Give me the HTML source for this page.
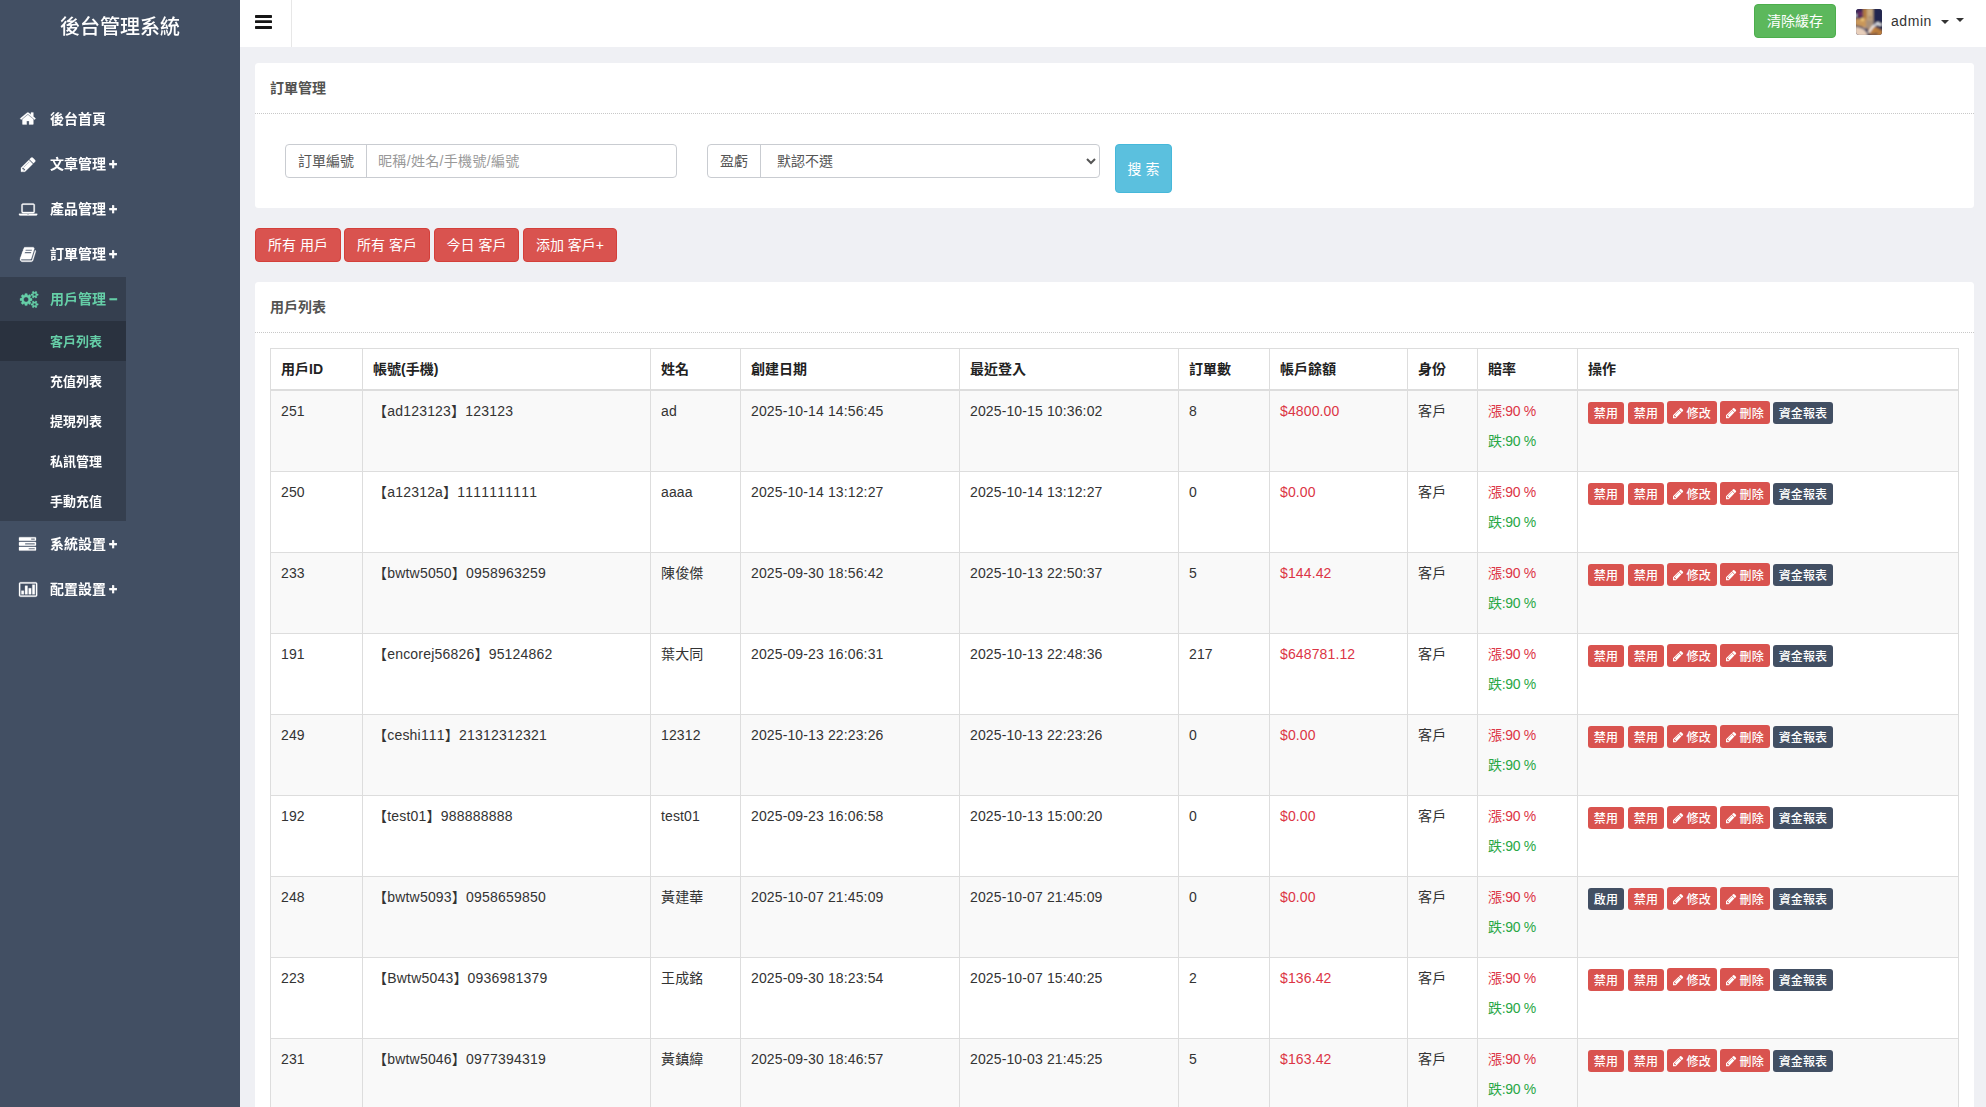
<!DOCTYPE html>
<html lang="zh-Hant">
<head>
<meta charset="utf-8">
<title>後台管理系統</title>
<style>
*{box-sizing:border-box;}
html,body{margin:0;padding:0;}
body{width:1986px;height:1107px;overflow:hidden;background:#eff0f4;font-family:"Liberation Sans","Noto Sans CJK TC",sans-serif;font-size:14px;line-height:20px;color:#333;position:relative;}
svg{display:block;}
/* ---------- sidebar ---------- */
#side{position:absolute;left:0;top:0;width:240px;height:1107px;background:#424f63;will-change:transform;}
#logo{position:absolute;left:0;top:0;width:240px;height:54px;line-height:54px;text-align:center;color:#fff;font-size:20px;font-weight:500;}
#nav{position:absolute;left:0;top:97px;width:126px;margin:0;padding:0;list-style:none;}
#nav>li{margin:0 0 1px 0;padding:0;}
#nav>li>a{display:block;position:relative;height:44px;line-height:44px;padding-left:50px;color:#fff;font-weight:bold;font-size:14px;white-space:nowrap;text-decoration:none;}
#nav>li>a .ic{position:absolute;left:0;top:0;}
#nav>li>a b{font-weight:bold;margin-left:3px;-webkit-text-stroke:0.6px currentColor;}
#nav>li.act{background:#353f4f;margin-bottom:1px;}
#nav>li.act>a{color:#65cea7;}
#nav ul{margin:0;padding:0;list-style:none;}
#nav ul li a{display:block;height:40px;line-height:41.5px;padding-left:50px;color:#fff;font-size:13px;font-weight:bold;text-decoration:none;}
#nav ul li.on a{background:#2a323f;color:#65cea7;}
/* ---------- header ---------- */
#head{position:absolute;left:240px;top:0;width:1746px;height:47px;background:#fff;}
#tog{position:absolute;left:0;top:0;width:52px;height:47px;border-right:1px solid #e7e7e7;}
#clr{display:block;position:absolute;left:1514px;top:4px;width:82px;height:34px;line-height:32px;border:1px solid #4cae4c;background:#5cb85c;color:#fff;border-radius:4px;text-align:center;font-size:14px;}
#ava{position:absolute;left:1616px;top:9px;width:26px;height:26px;border-radius:3px;overflow:hidden;}
#adm{position:absolute;left:1651px;top:11px;height:20px;line-height:20px;font-size:14px;color:#333;letter-spacing:0.55px;}
.caret{position:absolute;width:0;height:0;border-left:4px solid transparent;border-right:4px solid transparent;border-top:4px solid #333;}
/* ---------- panels ---------- */
.panel{position:absolute;left:255px;width:1719px;background:#fff;border-radius:3.5px;}
.ph{height:51px;padding:15px;line-height:20px;font-weight:bold;color:#535351;border-bottom:1px dotted #c8c8c8;font-size:14px;}
.ig{position:absolute;height:34px;border:1px solid #c9ccd1;border-radius:4px;background:#fff;}
.ig .ad{position:absolute;left:0;top:0;height:32px;line-height:32px;padding:0 12px;color:#555;border-right:1px solid #c9ccd1;}
.ig .inp{position:absolute;top:0;height:32px;line-height:32px;color:#999;}
.ig .ph1{letter-spacing:0.33px;}
#chev{position:absolute;left:377px;top:12.2px;}
.fc{position:absolute;top:0;height:32px;margin:0;border:0;outline:0;background:transparent;padding:6px 12px;font-family:"Liberation Sans","Noto Sans CJK TC",sans-serif;font-size:14px;line-height:20px;color:#555;border-radius:0 4px 4px 0;}
input.fc::placeholder{color:#999;opacity:1;letter-spacing:0.33px;}
#sbtn{margin:0;padding:0;font:inherit;font-size:14px;display:block;position:absolute;left:860px;top:81px;width:57px;height:49px;line-height:47px;padding-top:1px;border:1px solid #46b8da;background:#5bc0de;border-radius:4px;color:#fff;text-align:center;}
.rb{display:block;position:absolute;top:228px;height:34px;line-height:32px;border:1px solid #d43f3a;background:#d9534f;border-radius:4px;color:#fff;text-align:center;white-space:nowrap;}

/* ---------- table ---------- */
#tb{position:absolute;left:15px;top:66px;width:1689px;border-collapse:collapse;table-layout:fixed;border:1px solid #ddd;}
#tb th,#tb td{border:1px solid #ddd;padding:10px;vertical-align:top;text-align:left;line-height:20px;font-size:14px;color:#333;white-space:nowrap;overflow:hidden;}
#tb th{font-weight:bold;height:41px;border-bottom:2px solid #ddd;color:#222;}
#tb td{height:81px;}
#tb tbody tr:nth-child(odd) td{background:#f9f9f9;}
#tb td{letter-spacing:0.13px;font-kerning:none;}
#tb td.acc{letter-spacing:0.2px;}
#tb p{margin:0 0 10px 0;letter-spacing:-0.3px;}
#tb td.rd,#tb .rd{color:#dc3545;}
#tb .gr{color:#28a745;}
#tb td.ops{padding:11px 10px 0 10px;font-size:0;}
.lb{display:inline-block;vertical-align:top;height:22px;line-height:24px;width:36px;margin:0 3px 0 0;overflow:hidden;background:#d9534f;color:#fff;font-size:12px;font-weight:500;text-align:center;border-radius:3px;white-space:nowrap;}
.lb.dk{background:#424f63;}
.lb.w4{width:60px;}
.lb.ic2{width:50px;height:23px;margin-top:-1px;line-height:26px;}
.lb:first-child{margin-right:4px;}
</style>
</head>
<body>
<div id="side">
  <div id="logo">後台管理系統</div>
  <ul id="nav">
    <li><a><span class="ic" style="left:19.9px;top:13.2px"><svg width="15.786" height="17.000" viewBox="0 -1536 1664 1792" style="overflow:visible;"><path transform="scale(1,-1)" fill="#fff" stroke="#fff" stroke-width="30" stroke-linejoin="round" d="M1408 544v-480q0 -26 -19 -45t-45 -19h-384v384h-256v-384h-384q-26 0 -45 19t-19 45v480q0 1 0.5 3t0.5 3l575 474l575 -474q1 -2 1 -6zM1631 613l-62 -74q-8 -9 -21 -11h-3q-13 0 -21 7l-692 577l-692 -577q-12 -8 -24 -7q-13 2 -21 11l-62 74q-8 10 -7 23.5t11 21.5l719 599q32 26 76 26t76 -26l244 -204v195q0 14 9 23t23 9h192q14 0 23 -9t9 -23v-408l219 -182q10 -8 11 -21.5t-7 -23.5z"/></svg></span>後台首頁</a></li>
    <li><a><span class="ic" style="left:20.6px;top:13.5px"><svg width="14.571" height="17.000" viewBox="0 -1536 1536 1792" style="overflow:visible;"><path transform="scale(1,-1)" fill="#fff" stroke="#fff" stroke-width="30" stroke-linejoin="round" d="M363 0l91 91l-235 235l-91 -91v-107h128v-128h107zM886 928q0 22 -22 22q-10 0 -17 -7l-542 -542q-7 -7 -7 -17q0 -22 22 -22q10 0 17 7l542 542q7 7 7 17zM832 1120l416 -416l-832 -832h-416v416zM1515 1024q0 -53 -37 -90l-166 -166l-416 416l166 165q36 38 90 38q53 0 91 -38l235 -234q37 -39 37 -91z"/></svg></span>文章管理<b>+</b></a></li>
    <li><a><span class="ic" style="left:19.3px;top:13.5px"><svg width="18.214" height="17.000" viewBox="0 -1536 1920 1792" style="overflow:visible;"><path transform="scale(1,-1)" fill="#fff" stroke="#fff" stroke-width="30" stroke-linejoin="round" d="M416 256q-66 0 -113 47t-47 113v704q0 66 47 113t113 47h1088q66 0 113 -47t47 -113v-704q0 -66 -47 -113t-113 -47h-1088zM384 1120v-704q0 -13 9.5 -22.5t22.5 -9.5h1088q13 0 22.5 9.5t9.5 22.5v704q0 13 -9.5 22.5t-22.5 9.5h-1088q-13 0 -22.5 -9.5t-9.5 -22.5zM1760 192h160v-96q0 -40 -47 -68t-113 -28h-1600q-66 0 -113 28t-47 68v96h160h1600zM1040 96q16 0 16 16t-16 16h-160q-16 0 -16 -16t16 -16h160z"/></svg></span>產品管理<b>+</b></a></li>
    <li><a><span class="ic" style="left:20.0px;top:13.5px"><svg width="15.786" height="17.000" viewBox="0 -1536 1664 1792" style="overflow:visible;"><path transform="scale(1,-1)" fill="#fff" stroke="#fff" stroke-width="30" stroke-linejoin="round" d="M1639 1058q40 -57 18 -129l-275 -906q-19 -64 -76.5 -107.5t-122.5 -43.5h-923q-77 0 -148.5 53.5t-99.5 131.5q-24 67 -2 127q0 4 3 27t4 37q1 8 -3 21.5t-3 19.5q2 11 8 21t16.5 23.5t16.5 23.5q23 38 45 91.5t30 91.5q3 10 0.5 30t-0.5 28q3 11 17 28t17 23q21 36 42 92t25 90q1 9 -2.5 32t0.5 28q4 13 22 30.5t22 22.5q19 26 42.5 84.5t27.5 96.5q1 8 -3 25.5t-2 26.5q2 8 9 18t18 23t17 21q8 12 16.5 30.5t15 35t16 36t19.5 32t26.5 23.5t36 11.5t47.5 -5.5l-1 -3q38 9 51 9h761q74 0 114 -56t18 -130l-274 -906q-36 -119 -71.5 -153.5t-128.5 -34.5h-869q-27 0 -38 -15q-11 -16 -1 -43q24 -70 144 -70h923q29 0 56 15.5t35 41.5l300 987q7 22 5 57q38 -15 59 -43zM575 1056q-4 -13 2 -22.5t20 -9.5h608q13 0 25.5 9.5t16.5 22.5l21 64q4 13 -2 22.5t-20 9.5h-608q-13 0 -25.5 -9.5t-16.5 -22.5zM492 800q-4 -13 2 -22.5t20 -9.5h608q13 0 25.5 9.5t16.5 22.5l21 64q4 13 -2 22.5t-20 9.5h-608q-13 0 -25.5 -9.5t-16.5 -22.5z"/></svg></span>訂單管理<b>+</b></a></li>
    <li class="act"><a><span class="ic" style="left:19.6px;top:13.5px"><svg width="18.214" height="17.000" viewBox="0 -1536 1920 1792" style="overflow:visible;"><path transform="scale(1,-1)" fill="#65cea7" stroke="#65cea7" stroke-width="30" stroke-linejoin="round" d="M896 640q0 106 -75 181t-181 75t-181 -75t-75 -181t75 -181t181 -75t181 75t75 181zM1664 128q0 52 -38 90t-90 38t-90 -38t-38 -90q0 -53 37.5 -90.5t90.5 -37.5t90.5 37.5t37.5 90.5zM1664 1152q0 52 -38 90t-90 38t-90 -38t-38 -90q0 -53 37.5 -90.5t90.5 -37.5t90.5 37.5t37.5 90.5zM1280 731v-185q0 -10 -7 -19.5t-16 -10.5l-155 -24q-11 -35 -32 -76q34 -48 90 -115q7 -11 7 -20q0 -12 -7 -19q-23 -30 -82.5 -89.5t-78.5 -59.5q-11 0 -21 7l-115 90q-37 -19 -77 -31q-11 -108 -23 -155q-7 -24 -30 -24h-186q-11 0 -20 7.5t-10 17.5l-23 153q-34 10 -75 31l-118 -89q-7 -7 -20 -7q-11 0 -21 8q-144 133 -144 160q0 9 7 19q10 14 41 53t47 61q-23 44 -35 82l-152 24q-10 1 -17 9.5t-7 19.5v185q0 10 7 19.5t16 10.5l155 24q11 35 32 76q-34 48 -90 115q-7 11 -7 20q0 12 7 20q22 30 82 89t79 59q11 0 21 -7l115 -90q34 18 77 32q11 108 23 154q7 24 30 24h186q11 0 20 -7.5t10 -17.5l23 -153q34 -10 75 -31l118 89q8 7 20 7q11 0 21 -8q144 -133 144 -160q0 -8 -7 -19q-12 -16 -42 -54t-45 -60q23 -48 34 -82l152 -23q10 -2 17 -10.5t7 -19.5zM1920 198v-140q0 -16 -149 -31q-12 -27 -30 -52q51 -113 51 -138q0 -4 -4 -7q-122 -71 -124 -71q-8 0 -46 47t-52 68q-20 -2 -30 -2t-30 2q-14 -21 -52 -68t-46 -47q-2 0 -124 71q-4 3 -4 7q0 25 51 138q-18 25 -30 52q-149 15 -149 31v140q0 16 149 31q13 29 30 52q-51 113 -51 138q0 4 4 7q4 2 35 20t59 34t30 16q8 0 46 -46.5t52 -67.5q20 2 30 2t30 -2q51 71 92 112l6 2q4 0 124 -70q4 -3 4 -7q0 -25 -51 -138q17 -23 30 -52q149 -15 149 -31zM1920 1222v-140q0 -16 -149 -31q-12 -27 -30 -52q51 -113 51 -138q0 -4 -4 -7q-122 -71 -124 -71q-8 0 -46 47t-52 68q-20 -2 -30 -2t-30 2q-14 -21 -52 -68t-46 -47q-2 0 -124 71q-4 3 -4 7q0 25 51 138q-18 25 -30 52q-149 15 -149 31v140q0 16 149 31q13 29 30 52q-51 113 -51 138q0 4 4 7q4 2 35 20t59 34t30 16q8 0 46 -46.5t52 -67.5q20 2 30 2t30 -2q51 71 92 112l6 2q4 0 124 -70q4 -3 4 -7q0 -25 -51 -138q17 -23 30 -52q149 -15 149 -31z"/></svg></span>用戶管理<b>−</b></a>
      <ul>
        <li class="on"><a>客戶列表</a></li>
        <li><a>充值列表</a></li>
        <li><a>提現列表</a></li>
        <li><a>私訊管理</a></li>
        <li><a>手動充值</a></li>
      </ul>
    </li>
    <li><a><span class="ic" style="left:19.3px;top:13.5px"><svg width="17.000" height="17.000" viewBox="0 -1536 1792 1792" style="overflow:visible;"><path transform="scale(1,-1)" fill="#fff" stroke="#fff" stroke-width="30" stroke-linejoin="round" d="M1024 128h640v128h-640v-128zM640 640h1024v128h-1024v-128zM1280 1152h384v128h-384v-128zM1792 320v-256q0 -26 -19 -45t-45 -19h-1664q-26 0 -45 19t-19 45v256q0 26 19 45t45 19h1664q26 0 45 -19t19 -45zM1792 832v-256q0 -26 -19 -45t-45 -19h-1664q-26 0 -45 19t-19 45v256q0 26 19 45t45 19h1664q26 0 45 -19t19 -45zM1792 1344v-256q0 -26 -19 -45t-45 -19h-1664q-26 0 -45 19t-19 45v256q0 26 19 45t45 19h1664q26 0 45 -19t19 -45z"/></svg></span>系統設置<b>+</b></a></li>
    <li><a><span class="ic" style="left:19.4px;top:13.5px"><svg width="18.214" height="17.000" viewBox="0 -1536 1920 1792" style="overflow:visible;"><path transform="scale(1,-1)" fill="#fff" stroke="#fff" stroke-width="30" stroke-linejoin="round" d="M512 512v-384h-256v384h256zM896 1024v-896h-256v896h256zM1280 768v-640h-256v640h256zM1664 1152v-1024h-256v1024h256zM1792 32v1216q0 13 -9.5 22.5t-22.5 9.5h-1600q-13 0 -22.5 -9.5t-9.5 -22.5v-1216q0 -13 9.5 -22.5t22.5 -9.5h1600q13 0 22.5 9.5t9.5 22.5zM1920 1248v-1216q0 -66 -47 -113t-113 -47h-1600q-66 0 -113 47t-47 113v1216q0 66 47 113t113 47h1600q66 0 113 -47t47 -113z"/></svg></span>配置設置<b>+</b></a></li>
  </ul>
</div>
<div id="head">
  <div id="tog"><svg width="17" height="15" viewBox="0 0 17 15" style="position:absolute;left:15px;top:15px"><rect x="0" y="0" width="17" height="3" rx="0.7" fill="#161616"/><rect x="0" y="5.2" width="17" height="2.9" rx="0.7" fill="#161616"/><rect x="0" y="11" width="17" height="3" rx="0.7" fill="#161616"/></svg></div>
  <a id="clr">清除緩存</a>
  <div id="ava"><svg width="26" height="26" viewBox="0 0 26 26"><defs><filter id="bl" x="-10%" y="-10%" width="120%" height="120%"><feGaussianBlur stdDeviation="0.8"/></filter></defs>
<rect width="26" height="26" fill="#2a2c52"/>
<g filter="url(#bl)">
<rect x="-1" y="-1" width="9" height="11" fill="#3b2858"/>
<rect x="2" y="3" width="5" height="4" fill="#6a2a60"/>
<rect x="7" y="-1" width="4.5" height="16" fill="#b07a40"/>
<rect x="11" y="-1" width="6.5" height="16" fill="#c9ab80"/>
<rect x="12.5" y="7" width="3" height="3" fill="#a88a70"/>
<rect x="17.5" y="-1" width="9.5" height="15" fill="#232850"/>
<rect x="-1" y="9.5" width="11" height="9" fill="#c9975a"/>
<rect x="5" y="9" width="3" height="3" fill="#f0c878"/>
<rect x="10" y="11" width="7.5" height="9" fill="#a8907a"/>
<path d="M-1 18 L9 18 L12 27 L-1 27 Z" fill="#e8cfbb"/>
<path d="M12 20 L18 17 L27 22 L27 27 L12 27 Z" fill="#bd7f3e"/>
<path d="M17 16 L27 12 L27 21 Z" fill="#20264a"/>
<path d="M-1 17 Q6 17.5 9.5 21 T12 27" fill="none" stroke="#2c3458" stroke-width="1.6"/>
<path d="M12 24 L14 26 L22 24.5" fill="none" stroke="#2a2f50" stroke-width="1.2"/>
<path d="M12.5 23.5 L17 17.5 L20 15.5 L22 14 L23.5 16 L26 15" fill="none" stroke="#ffffff" stroke-width="1.7"/>
<rect x="-1" y="5" width="1.8" height="3" fill="#dfe6f0"/>
</g></svg></div>
  <div id="adm">admin</div>
  <span class="caret" style="left:1701px;top:20px"></span>
  <span class="caret" style="left:1716px;top:18px"></span>
</div>
<div class="panel" id="p1" style="top:63px;height:145px;">
  <div class="ph">訂單管理</div>
  <div class="ig" style="left:30px;top:81px;width:392px;"><span class="ad">訂單編號</span><input class="fc" type="text" placeholder="昵稱/姓名/手機號/編號" style="left:80px;width:310px;"></div>
  <div class="ig" style="left:452px;top:81px;width:393px;"><span class="ad">盈虧</span><select class="fc" style="left:53px;width:338px;"><option>默認不選</option><option>盈利</option><option>虧損</option></select></div>
  <button id="sbtn" type="button">搜 索</button>
</div>
<a class="rb" style="left:255px;width:86px;">所有 用戶</a>
<a class="rb" style="left:344px;width:86px;">所有 客戶</a>
<a class="rb" style="left:434px;width:85px;">今日 客戶</a>
<a class="rb" style="left:523px;width:94px;">添加 客戶+</a>
<div class="panel" id="p2" style="top:282px;height:900px;">
  <div class="ph">用戶列表</div>
  <table id="tb"><colgroup><col style="width:92px"><col style="width:288px"><col style="width:90px"><col style="width:219px"><col style="width:219px"><col style="width:91px"><col style="width:138px"><col style="width:70px"><col style="width:100px"><col style="width:381px"></colgroup>
<thead><tr><th>用戶ID</th><th>帳號(手機)</th><th>姓名</th><th>創建日期</th><th>最近登入</th><th>訂單數</th><th>帳戶餘額</th><th>身份</th><th>賠率</th><th>操作</th></tr></thead><tbody>
<tr><td>251</td><td class="acc">【ad123123】123123</td><td>ad</td><td>2025-10-14 14:56:45</td><td>2025-10-15 10:36:02</td><td>8</td><td class="rd">$4800.00</td><td>客戶</td><td><p class="rd">漲:90 %</p><p class="gr">跌:90 %</p></td><td class="ops"><span class="lb">禁用</span><span class="lb">禁用</span><span class="lb ic2"><svg width="10.286" height="12.000" viewBox="0 -1536 1536 1792" style="overflow:visible;display:inline-block;vertical-align:-1px;margin-right:3px"><path transform="scale(1,-1)" fill="#fff" d="M363 0l91 91l-235 235l-91 -91v-107h128v-128h107zM886 928q0 22 -22 22q-10 0 -17 -7l-542 -542q-7 -7 -7 -17q0 -22 22 -22q10 0 17 7l542 542q7 7 7 17zM832 1120l416 -416l-832 -832h-416v416zM1515 1024q0 -53 -37 -90l-166 -166l-416 416l166 165q36 38 90 38q53 0 91 -38l235 -234q37 -39 37 -91z"/></svg>修改</span><span class="lb ic2"><svg width="10.286" height="12.000" viewBox="0 -1536 1536 1792" style="overflow:visible;display:inline-block;vertical-align:-1px;margin-right:3px"><path transform="scale(1,-1)" fill="#fff" d="M363 0l91 91l-235 235l-91 -91v-107h128v-128h107zM886 928q0 22 -22 22q-10 0 -17 -7l-542 -542q-7 -7 -7 -17q0 -22 22 -22q10 0 17 7l542 542q7 7 7 17zM832 1120l416 -416l-832 -832h-416v416zM1515 1024q0 -53 -37 -90l-166 -166l-416 416l166 165q36 38 90 38q53 0 91 -38l235 -234q37 -39 37 -91z"/></svg>刪除</span><span class="lb dk w4">資金報表</span></td></tr>
<tr><td>250</td><td class="acc">【a12312a】1111111111</td><td>aaaa</td><td>2025-10-14 13:12:27</td><td>2025-10-14 13:12:27</td><td>0</td><td class="rd">$0.00</td><td>客戶</td><td><p class="rd">漲:90 %</p><p class="gr">跌:90 %</p></td><td class="ops"><span class="lb">禁用</span><span class="lb">禁用</span><span class="lb ic2"><svg width="10.286" height="12.000" viewBox="0 -1536 1536 1792" style="overflow:visible;display:inline-block;vertical-align:-1px;margin-right:3px"><path transform="scale(1,-1)" fill="#fff" d="M363 0l91 91l-235 235l-91 -91v-107h128v-128h107zM886 928q0 22 -22 22q-10 0 -17 -7l-542 -542q-7 -7 -7 -17q0 -22 22 -22q10 0 17 7l542 542q7 7 7 17zM832 1120l416 -416l-832 -832h-416v416zM1515 1024q0 -53 -37 -90l-166 -166l-416 416l166 165q36 38 90 38q53 0 91 -38l235 -234q37 -39 37 -91z"/></svg>修改</span><span class="lb ic2"><svg width="10.286" height="12.000" viewBox="0 -1536 1536 1792" style="overflow:visible;display:inline-block;vertical-align:-1px;margin-right:3px"><path transform="scale(1,-1)" fill="#fff" d="M363 0l91 91l-235 235l-91 -91v-107h128v-128h107zM886 928q0 22 -22 22q-10 0 -17 -7l-542 -542q-7 -7 -7 -17q0 -22 22 -22q10 0 17 7l542 542q7 7 7 17zM832 1120l416 -416l-832 -832h-416v416zM1515 1024q0 -53 -37 -90l-166 -166l-416 416l166 165q36 38 90 38q53 0 91 -38l235 -234q37 -39 37 -91z"/></svg>刪除</span><span class="lb dk w4">資金報表</span></td></tr>
<tr><td>233</td><td class="acc">【bwtw5050】0958963259</td><td>陳俊傑</td><td>2025-09-30 18:56:42</td><td>2025-10-13 22:50:37</td><td>5</td><td class="rd">$144.42</td><td>客戶</td><td><p class="rd">漲:90 %</p><p class="gr">跌:90 %</p></td><td class="ops"><span class="lb">禁用</span><span class="lb">禁用</span><span class="lb ic2"><svg width="10.286" height="12.000" viewBox="0 -1536 1536 1792" style="overflow:visible;display:inline-block;vertical-align:-1px;margin-right:3px"><path transform="scale(1,-1)" fill="#fff" d="M363 0l91 91l-235 235l-91 -91v-107h128v-128h107zM886 928q0 22 -22 22q-10 0 -17 -7l-542 -542q-7 -7 -7 -17q0 -22 22 -22q10 0 17 7l542 542q7 7 7 17zM832 1120l416 -416l-832 -832h-416v416zM1515 1024q0 -53 -37 -90l-166 -166l-416 416l166 165q36 38 90 38q53 0 91 -38l235 -234q37 -39 37 -91z"/></svg>修改</span><span class="lb ic2"><svg width="10.286" height="12.000" viewBox="0 -1536 1536 1792" style="overflow:visible;display:inline-block;vertical-align:-1px;margin-right:3px"><path transform="scale(1,-1)" fill="#fff" d="M363 0l91 91l-235 235l-91 -91v-107h128v-128h107zM886 928q0 22 -22 22q-10 0 -17 -7l-542 -542q-7 -7 -7 -17q0 -22 22 -22q10 0 17 7l542 542q7 7 7 17zM832 1120l416 -416l-832 -832h-416v416zM1515 1024q0 -53 -37 -90l-166 -166l-416 416l166 165q36 38 90 38q53 0 91 -38l235 -234q37 -39 37 -91z"/></svg>刪除</span><span class="lb dk w4">資金報表</span></td></tr>
<tr><td>191</td><td class="acc">【encorej56826】95124862</td><td>葉大同</td><td>2025-09-23 16:06:31</td><td>2025-10-13 22:48:36</td><td>217</td><td class="rd">$648781.12</td><td>客戶</td><td><p class="rd">漲:90 %</p><p class="gr">跌:90 %</p></td><td class="ops"><span class="lb">禁用</span><span class="lb">禁用</span><span class="lb ic2"><svg width="10.286" height="12.000" viewBox="0 -1536 1536 1792" style="overflow:visible;display:inline-block;vertical-align:-1px;margin-right:3px"><path transform="scale(1,-1)" fill="#fff" d="M363 0l91 91l-235 235l-91 -91v-107h128v-128h107zM886 928q0 22 -22 22q-10 0 -17 -7l-542 -542q-7 -7 -7 -17q0 -22 22 -22q10 0 17 7l542 542q7 7 7 17zM832 1120l416 -416l-832 -832h-416v416zM1515 1024q0 -53 -37 -90l-166 -166l-416 416l166 165q36 38 90 38q53 0 91 -38l235 -234q37 -39 37 -91z"/></svg>修改</span><span class="lb ic2"><svg width="10.286" height="12.000" viewBox="0 -1536 1536 1792" style="overflow:visible;display:inline-block;vertical-align:-1px;margin-right:3px"><path transform="scale(1,-1)" fill="#fff" d="M363 0l91 91l-235 235l-91 -91v-107h128v-128h107zM886 928q0 22 -22 22q-10 0 -17 -7l-542 -542q-7 -7 -7 -17q0 -22 22 -22q10 0 17 7l542 542q7 7 7 17zM832 1120l416 -416l-832 -832h-416v416zM1515 1024q0 -53 -37 -90l-166 -166l-416 416l166 165q36 38 90 38q53 0 91 -38l235 -234q37 -39 37 -91z"/></svg>刪除</span><span class="lb dk w4">資金報表</span></td></tr>
<tr><td>249</td><td class="acc">【ceshi111】21312312321</td><td>12312</td><td>2025-10-13 22:23:26</td><td>2025-10-13 22:23:26</td><td>0</td><td class="rd">$0.00</td><td>客戶</td><td><p class="rd">漲:90 %</p><p class="gr">跌:90 %</p></td><td class="ops"><span class="lb">禁用</span><span class="lb">禁用</span><span class="lb ic2"><svg width="10.286" height="12.000" viewBox="0 -1536 1536 1792" style="overflow:visible;display:inline-block;vertical-align:-1px;margin-right:3px"><path transform="scale(1,-1)" fill="#fff" d="M363 0l91 91l-235 235l-91 -91v-107h128v-128h107zM886 928q0 22 -22 22q-10 0 -17 -7l-542 -542q-7 -7 -7 -17q0 -22 22 -22q10 0 17 7l542 542q7 7 7 17zM832 1120l416 -416l-832 -832h-416v416zM1515 1024q0 -53 -37 -90l-166 -166l-416 416l166 165q36 38 90 38q53 0 91 -38l235 -234q37 -39 37 -91z"/></svg>修改</span><span class="lb ic2"><svg width="10.286" height="12.000" viewBox="0 -1536 1536 1792" style="overflow:visible;display:inline-block;vertical-align:-1px;margin-right:3px"><path transform="scale(1,-1)" fill="#fff" d="M363 0l91 91l-235 235l-91 -91v-107h128v-128h107zM886 928q0 22 -22 22q-10 0 -17 -7l-542 -542q-7 -7 -7 -17q0 -22 22 -22q10 0 17 7l542 542q7 7 7 17zM832 1120l416 -416l-832 -832h-416v416zM1515 1024q0 -53 -37 -90l-166 -166l-416 416l166 165q36 38 90 38q53 0 91 -38l235 -234q37 -39 37 -91z"/></svg>刪除</span><span class="lb dk w4">資金報表</span></td></tr>
<tr><td>192</td><td class="acc">【test01】988888888</td><td>test01</td><td>2025-09-23 16:06:58</td><td>2025-10-13 15:00:20</td><td>0</td><td class="rd">$0.00</td><td>客戶</td><td><p class="rd">漲:90 %</p><p class="gr">跌:90 %</p></td><td class="ops"><span class="lb">禁用</span><span class="lb">禁用</span><span class="lb ic2"><svg width="10.286" height="12.000" viewBox="0 -1536 1536 1792" style="overflow:visible;display:inline-block;vertical-align:-1px;margin-right:3px"><path transform="scale(1,-1)" fill="#fff" d="M363 0l91 91l-235 235l-91 -91v-107h128v-128h107zM886 928q0 22 -22 22q-10 0 -17 -7l-542 -542q-7 -7 -7 -17q0 -22 22 -22q10 0 17 7l542 542q7 7 7 17zM832 1120l416 -416l-832 -832h-416v416zM1515 1024q0 -53 -37 -90l-166 -166l-416 416l166 165q36 38 90 38q53 0 91 -38l235 -234q37 -39 37 -91z"/></svg>修改</span><span class="lb ic2"><svg width="10.286" height="12.000" viewBox="0 -1536 1536 1792" style="overflow:visible;display:inline-block;vertical-align:-1px;margin-right:3px"><path transform="scale(1,-1)" fill="#fff" d="M363 0l91 91l-235 235l-91 -91v-107h128v-128h107zM886 928q0 22 -22 22q-10 0 -17 -7l-542 -542q-7 -7 -7 -17q0 -22 22 -22q10 0 17 7l542 542q7 7 7 17zM832 1120l416 -416l-832 -832h-416v416zM1515 1024q0 -53 -37 -90l-166 -166l-416 416l166 165q36 38 90 38q53 0 91 -38l235 -234q37 -39 37 -91z"/></svg>刪除</span><span class="lb dk w4">資金報表</span></td></tr>
<tr><td>248</td><td class="acc">【bwtw5093】0958659850</td><td>黃建華</td><td>2025-10-07 21:45:09</td><td>2025-10-07 21:45:09</td><td>0</td><td class="rd">$0.00</td><td>客戶</td><td><p class="rd">漲:90 %</p><p class="gr">跌:90 %</p></td><td class="ops"><span class="lb dk">啟用</span><span class="lb">禁用</span><span class="lb ic2"><svg width="10.286" height="12.000" viewBox="0 -1536 1536 1792" style="overflow:visible;display:inline-block;vertical-align:-1px;margin-right:3px"><path transform="scale(1,-1)" fill="#fff" d="M363 0l91 91l-235 235l-91 -91v-107h128v-128h107zM886 928q0 22 -22 22q-10 0 -17 -7l-542 -542q-7 -7 -7 -17q0 -22 22 -22q10 0 17 7l542 542q7 7 7 17zM832 1120l416 -416l-832 -832h-416v416zM1515 1024q0 -53 -37 -90l-166 -166l-416 416l166 165q36 38 90 38q53 0 91 -38l235 -234q37 -39 37 -91z"/></svg>修改</span><span class="lb ic2"><svg width="10.286" height="12.000" viewBox="0 -1536 1536 1792" style="overflow:visible;display:inline-block;vertical-align:-1px;margin-right:3px"><path transform="scale(1,-1)" fill="#fff" d="M363 0l91 91l-235 235l-91 -91v-107h128v-128h107zM886 928q0 22 -22 22q-10 0 -17 -7l-542 -542q-7 -7 -7 -17q0 -22 22 -22q10 0 17 7l542 542q7 7 7 17zM832 1120l416 -416l-832 -832h-416v416zM1515 1024q0 -53 -37 -90l-166 -166l-416 416l166 165q36 38 90 38q53 0 91 -38l235 -234q37 -39 37 -91z"/></svg>刪除</span><span class="lb dk w4">資金報表</span></td></tr>
<tr><td>223</td><td class="acc">【Bwtw5043】0936981379</td><td>王成銘</td><td>2025-09-30 18:23:54</td><td>2025-10-07 15:40:25</td><td>2</td><td class="rd">$136.42</td><td>客戶</td><td><p class="rd">漲:90 %</p><p class="gr">跌:90 %</p></td><td class="ops"><span class="lb">禁用</span><span class="lb">禁用</span><span class="lb ic2"><svg width="10.286" height="12.000" viewBox="0 -1536 1536 1792" style="overflow:visible;display:inline-block;vertical-align:-1px;margin-right:3px"><path transform="scale(1,-1)" fill="#fff" d="M363 0l91 91l-235 235l-91 -91v-107h128v-128h107zM886 928q0 22 -22 22q-10 0 -17 -7l-542 -542q-7 -7 -7 -17q0 -22 22 -22q10 0 17 7l542 542q7 7 7 17zM832 1120l416 -416l-832 -832h-416v416zM1515 1024q0 -53 -37 -90l-166 -166l-416 416l166 165q36 38 90 38q53 0 91 -38l235 -234q37 -39 37 -91z"/></svg>修改</span><span class="lb ic2"><svg width="10.286" height="12.000" viewBox="0 -1536 1536 1792" style="overflow:visible;display:inline-block;vertical-align:-1px;margin-right:3px"><path transform="scale(1,-1)" fill="#fff" d="M363 0l91 91l-235 235l-91 -91v-107h128v-128h107zM886 928q0 22 -22 22q-10 0 -17 -7l-542 -542q-7 -7 -7 -17q0 -22 22 -22q10 0 17 7l542 542q7 7 7 17zM832 1120l416 -416l-832 -832h-416v416zM1515 1024q0 -53 -37 -90l-166 -166l-416 416l166 165q36 38 90 38q53 0 91 -38l235 -234q37 -39 37 -91z"/></svg>刪除</span><span class="lb dk w4">資金報表</span></td></tr>
<tr><td>231</td><td class="acc">【bwtw5046】0977394319</td><td>黃鎮緯</td><td>2025-09-30 18:46:57</td><td>2025-10-03 21:45:25</td><td>5</td><td class="rd">$163.42</td><td>客戶</td><td><p class="rd">漲:90 %</p><p class="gr">跌:90 %</p></td><td class="ops"><span class="lb">禁用</span><span class="lb">禁用</span><span class="lb ic2"><svg width="10.286" height="12.000" viewBox="0 -1536 1536 1792" style="overflow:visible;display:inline-block;vertical-align:-1px;margin-right:3px"><path transform="scale(1,-1)" fill="#fff" d="M363 0l91 91l-235 235l-91 -91v-107h128v-128h107zM886 928q0 22 -22 22q-10 0 -17 -7l-542 -542q-7 -7 -7 -17q0 -22 22 -22q10 0 17 7l542 542q7 7 7 17zM832 1120l416 -416l-832 -832h-416v416zM1515 1024q0 -53 -37 -90l-166 -166l-416 416l166 165q36 38 90 38q53 0 91 -38l235 -234q37 -39 37 -91z"/></svg>修改</span><span class="lb ic2"><svg width="10.286" height="12.000" viewBox="0 -1536 1536 1792" style="overflow:visible;display:inline-block;vertical-align:-1px;margin-right:3px"><path transform="scale(1,-1)" fill="#fff" d="M363 0l91 91l-235 235l-91 -91v-107h128v-128h107zM886 928q0 22 -22 22q-10 0 -17 -7l-542 -542q-7 -7 -7 -17q0 -22 22 -22q10 0 17 7l542 542q7 7 7 17zM832 1120l416 -416l-832 -832h-416v416zM1515 1024q0 -53 -37 -90l-166 -166l-416 416l166 165q36 38 90 38q53 0 91 -38l235 -234q37 -39 37 -91z"/></svg>刪除</span><span class="lb dk w4">資金報表</span></td></tr>
</tbody></table>
</div>
</body>
</html>
